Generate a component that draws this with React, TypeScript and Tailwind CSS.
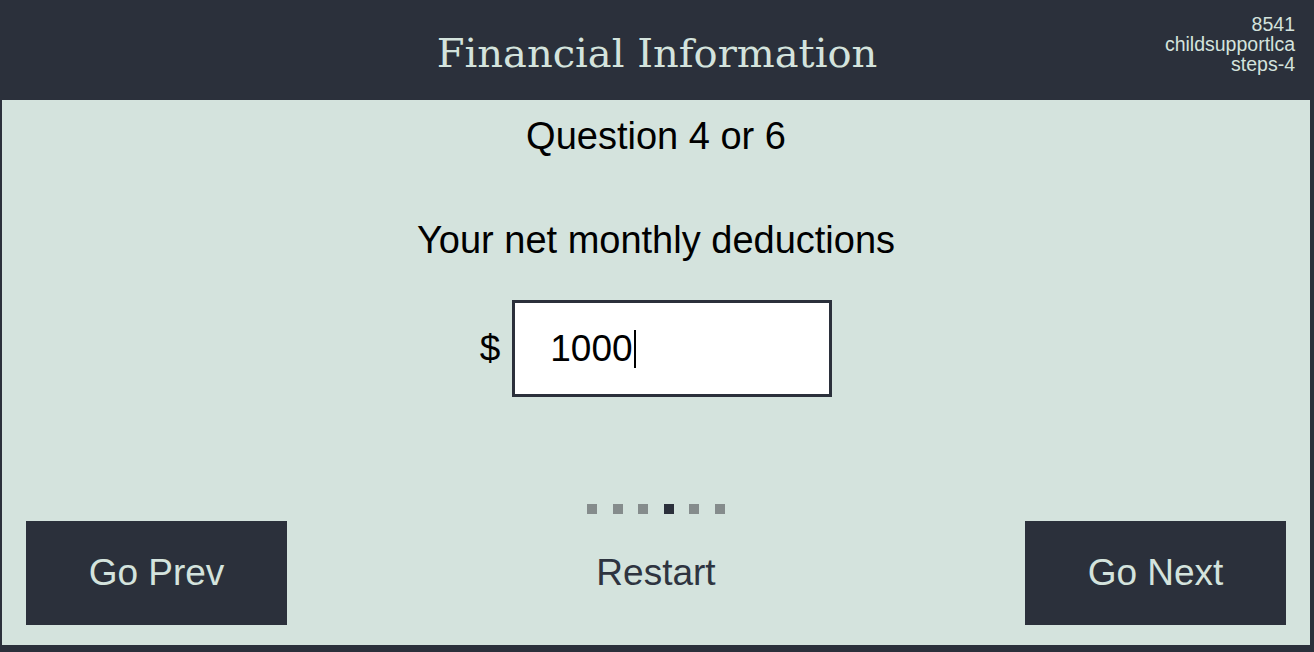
import React from "react";

const DOTS = [0, 1, 2, 3, 4, 5];
const CURRENT = 3;

export default function App() {
  return (
    <div className="flex h-[652px] w-full flex-col bg-[#2b303b] font-['Liberation_Sans',Arial,sans-serif]">
      {/* Header */}
      <header className="relative flex h-[100px] shrink-0 items-center justify-center">
        <h1 className="pt-[5px] font-['DejaVu_Serif',serif] text-[40px] font-normal leading-none text-[#d4e3dd]">
          Financial Information
        </h1>
        <div className="absolute right-[19px] top-[14px] text-right text-[19.5px] leading-[20px] text-[#d4e3dd]">
          <div>8541</div>
          <div>childsupportlca</div>
          <div>steps-4</div>
        </div>
      </header>

      {/* Body */}
      <div className="flex flex-1 pb-[7px] pl-[2px] pr-[4px]">
        <main className="flex flex-1 flex-col items-center bg-[#d4e3dd] pt-[14px]">
          <h2 className="text-[38px] leading-[44px] text-black">Question 4 or 6</h2>

          <p className="mt-[60px] text-[38px] leading-[44px] text-black">
            Your net monthly deductions
          </p>

          <div className="mt-[38px] flex items-center gap-[12px]">
            <span className="text-[37px] text-black">$</span>
            <div className="flex h-[97px] w-[320px] items-center border-[3px] border-[#2b303b] bg-white pl-[35px]">
              <span className="text-[37px] leading-none text-black">1000</span>
              <span className="ml-[1px] h-[38px] w-[2px] bg-black" />
            </div>
          </div>

          <div className="mt-[107px] flex gap-[15.6px]">
            {DOTS.map((d) => (
              <span
                key={d}
                className={
                  d === CURRENT
                    ? "h-[10px] w-[10px] bg-[#2b303b]"
                    : "h-[10px] w-[10px] bg-[#858c8c]"
                }
              />
            ))}
          </div>

          <div className="mt-[7px] flex w-full items-center px-[24px]">
            <button className="h-[104px] w-[261px] bg-[#2b303b] text-[37px] text-[#d4e3dd]">
              Go Prev
            </button>
            <div className="flex flex-1 justify-center">
              <button className="text-[37px] text-[#2e3440]">Restart</button>
            </div>
            <button className="h-[104px] w-[261px] bg-[#2b303b] text-[37px] text-[#d4e3dd]">
              Go Next
            </button>
          </div>
        </main>
      </div>
    </div>
  );
}
